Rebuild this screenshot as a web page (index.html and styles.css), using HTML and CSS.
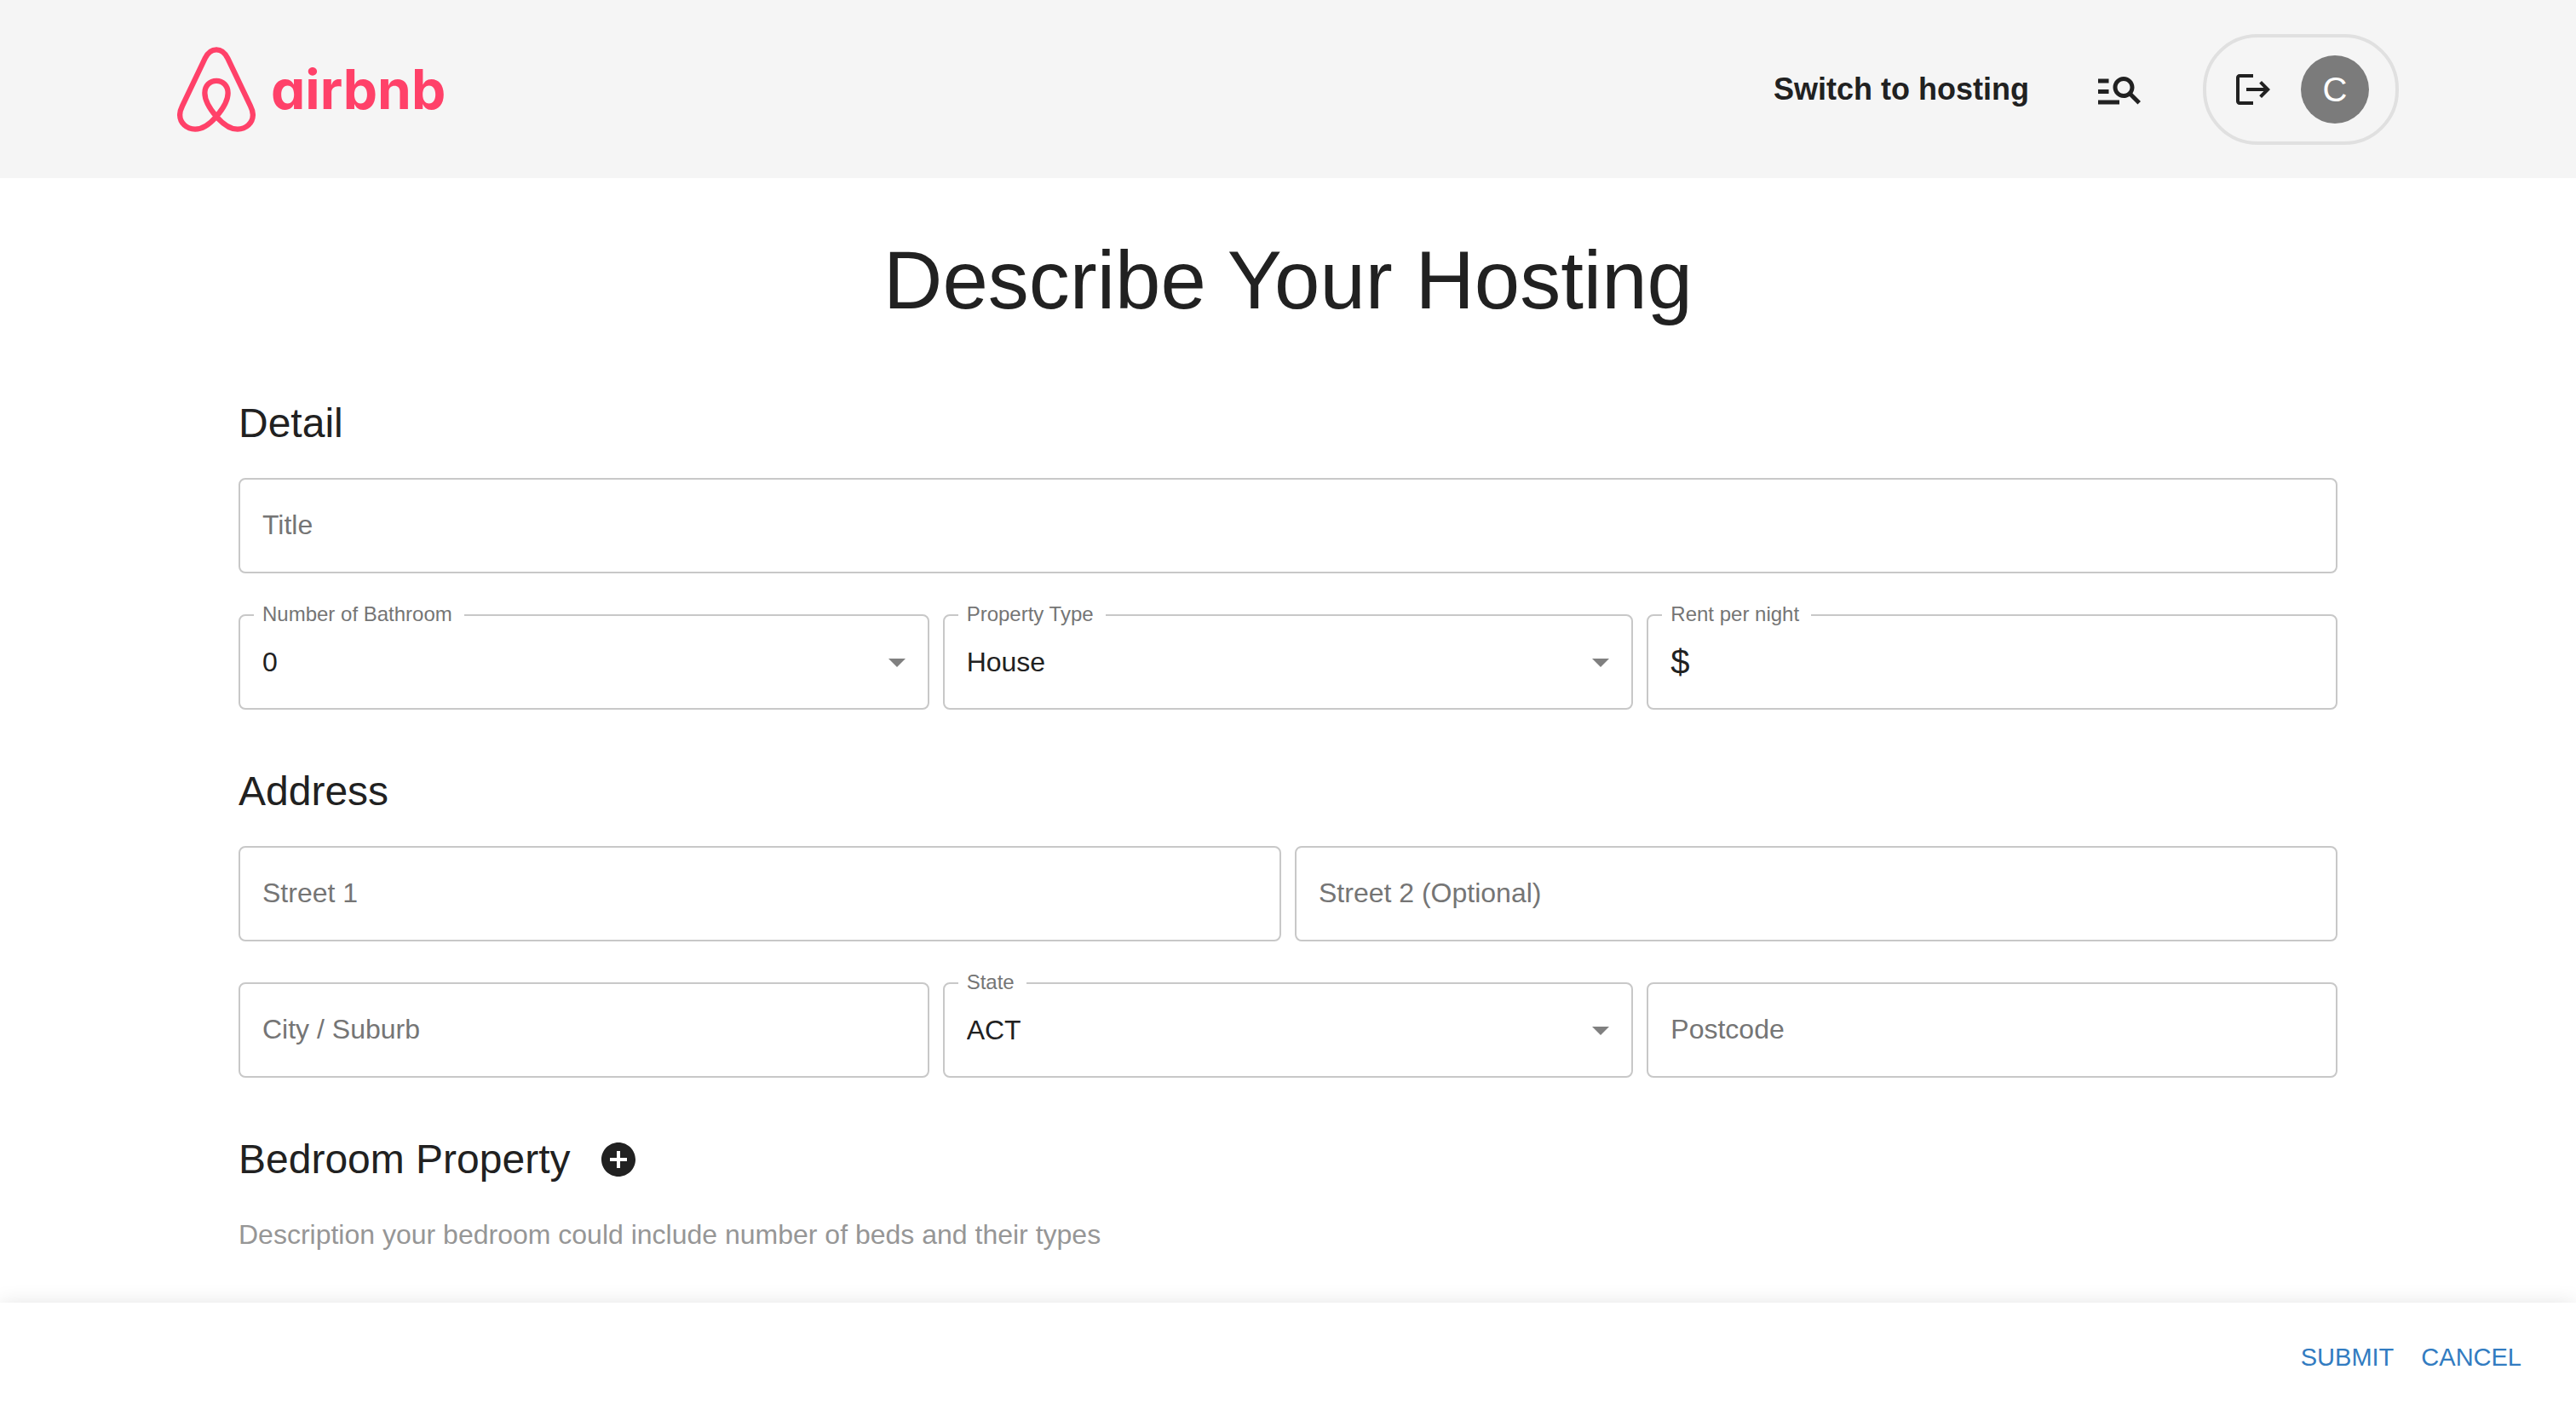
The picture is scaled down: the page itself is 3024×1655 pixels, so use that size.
FILE: index.html
```html
<!DOCTYPE html>
<html lang="en">
<head>
  <meta charset="utf-8">
  <meta name="viewport" content="width=device-width, initial-scale=1">
  <title>Describe Your Hosting</title>
  <link rel="stylesheet" href="styles.css">
</head>
<body>
  <header class="header">
    <div class="header-inner">
      <a class="brand" href="#">
        <svg class="brand-mark" viewBox="54 74 276 301" aria-hidden="true">
          <path d="M192 84C172 84 160 98 152 114L72 282C66 294 63 303 63 314C63 343 87 365 117 365C146 365 172 343 192 320C214 294 233 265 233 237C233 211 215 194 192 194C169 194 151 211 151 237C151 265 170 294 192 320C212 343 238 365 267 365C297 365 321 343 321 314C321 303 318 294 312 282L232 114C224 98 212 84 192 84Z"/>
        </svg>
        <span class="brand-name">airbnb</span>
      </a>
      <nav class="nav">
        <a class="nav-link" href="#">Switch to hosting</a>
        <button class="icon-button" type="button" aria-label="Search listings">
          <svg class="icon-search" viewBox="0 0 24 24" aria-hidden="true"><path d="M7 9H2V7h5v2zm0 3H2v2h5v-2zm13.59 7-3.83-3.83c-.8.52-1.74.83-2.76.83-2.76 0-5-2.24-5-5s2.24-5 5-5 5 2.24 5 5c0 1.02-.31 1.96-.83 2.75L22 17.59 20.59 19zM17 11c0-1.65-1.35-3-3-3s-3 1.35-3 3 1.35 3 3 3 3-1.35 3-3zM2 19h10v-2H2v2z"/></svg>
        </button>
        <div class="account">
          <button class="icon-button" type="button" aria-label="Log out">
            <svg class="icon" viewBox="0 0 24 24" aria-hidden="true"><path d="m17 7-1.41 1.41L18.17 11H8v2h10.17l-2.58 2.58L17 17l5-5zM4 5h8V3H4c-1.1 0-2 .9-2 2v14c0 1.1.9 2 2 2h8v-2H4V5z"/></svg>
          </button>
          <button class="avatar" type="button">C</button>
        </div>
      </nav>
    </div>
  </header>

  <main class="main">
    <h1 class="page-title">Describe Your Hosting</h1>
    <form class="form" id="hosting-form">
      <section class="section">
        <h2 class="section-title">Detail</h2>
        <div class="fields">
          <div class="field span-6">
            <input class="control" id="title" type="text">
            <label class="label" for="title">Title</label>
          </div>
          <div class="field span-2">
            <select class="control" id="bathrooms"><option>0</option><option>1</option><option>2</option><option>3</option></select>
            <label class="label label-raised" for="bathrooms">Number of Bathroom</label>
            <svg class="arrow" viewBox="0 0 24 24" aria-hidden="true"><path d="M7 10l5 5 5-5z"/></svg>
          </div>
          <div class="field span-2">
            <select class="control" id="type"><option>House</option><option>Apartment</option></select>
            <label class="label label-raised" for="type">Property Type</label>
            <svg class="arrow" viewBox="0 0 24 24" aria-hidden="true"><path d="M7 10l5 5 5-5z"/></svg>
          </div>
          <div class="field span-2">
            <input class="control control-money" id="rent" type="text" inputmode="numeric">
            <label class="label label-raised" for="rent">Rent per night</label>
            <span class="currency">$</span>
          </div>
        </div>
      </section>

      <section class="section">
        <h2 class="section-title">Address</h2>
        <div class="fields">
          <div class="field span-3">
            <input class="control" id="street1" type="text">
            <label class="label" for="street1">Street 1</label>
          </div>
          <div class="field span-3">
            <input class="control" id="street2" type="text">
            <label class="label" for="street2">Street 2 (Optional)</label>
          </div>
          <div class="field span-2">
            <input class="control" id="city" type="text">
            <label class="label" for="city">City / Suburb</label>
          </div>
          <div class="field span-2">
            <select class="control" id="state"><option>ACT</option><option>NSW</option><option>VIC</option></select>
            <label class="label label-raised" for="state">State</label>
            <svg class="arrow" viewBox="0 0 24 24" aria-hidden="true"><path d="M7 10l5 5 5-5z"/></svg>
          </div>
          <div class="field span-2">
            <input class="control" id="postcode" type="text">
            <label class="label" for="postcode">Postcode</label>
          </div>
        </div>
      </section>

      <section class="section">
        <div class="section-head">
          <h2 class="section-title">Bedroom Property</h2>
          <button class="icon-button" type="button" aria-label="Add bedroom">
            <svg class="icon" viewBox="0 0 24 24" aria-hidden="true"><path d="M12 2C6.48 2 2 6.48 2 12s4.48 10 10 10 10-4.48 10-10S17.52 2 12 2zm5 11h-4v4h-2v-4H7v-2h4V7h2v4h4v2z"/></svg>
          </button>
        </div>
        <p class="hint">Description your bedroom could include number of beds and their types</p>
      </section>
    </form>
  </main>

  <footer class="footer">
    <button class="text-button" type="submit" form="hosting-form">SUBMIT</button>
    <button class="text-button" type="button">CANCEL</button>
  </footer>
</body>
</html>
```
FILE: styles.css
```css
* {
  box-sizing: border-box;
}

body {
  margin: 0;
  min-height: 100vh;
  display: flex;
  flex-direction: column;
  background: #fff;
  color: #212121;
  font-family: "Liberation Sans", Arial, Helvetica, sans-serif;
  font-size: 32px;
  line-height: 48px;
}

button,
input,
select {
  font: inherit;
  color: inherit;
}

button {
  margin: 0;
  padding: 0;
  border: 0;
  background: none;
  cursor: pointer;
}

svg {
  display: block;
  fill: currentColor;
}

/* Header */

.header {
  background: #f5f5f5;
  padding: 40px 32px 39px;
}

.header-inner {
  max-width: 2608px;
  margin: 0 auto;
  display: flex;
  align-items: center;
  justify-content: space-between;
}

.brand {
  display: flex;
  align-items: center;
  gap: 18px;
  color: #ff4169;
  text-decoration: none;
}

.brand-mark {
  width: 92px;
  height: 100px;
  fill: none;
  stroke: currentColor;
  stroke-width: 19px;
}

.brand-name {
  font-family: Inter, "Liberation Sans", sans-serif;
  font-feature-settings: "cv11";
  font-size: 64px;
  font-weight: 700;
  line-height: 96px;
}

.nav {
  display: flex;
  align-items: center;
  gap: 68px;
}

.nav-link {
  padding-right: 8px;
  color: inherit;
  font-size: 36px;
  font-weight: 700;
  text-decoration: none;
}

.icon {
  width: 48px;
  height: 48px;
}

.icon-search {
  width: 60px;
  height: 60px;
}

.account {
  display: flex;
  align-items: center;
  gap: 32px;
  padding: 21px 31px;
  border: 4px solid #e0e0e0;
  border-radius: 64px;
}

.avatar {
  width: 80px;
  height: 80px;
  border-radius: 50%;
  background: #7b7b7b;
  color: #fff;
  font-size: 40px;
}

/* Form */

.main {
  flex: 1;
  width: 100%;
  max-width: 2528px;
  margin: 0 auto;
  padding: 64px 32px 48px;
}

.page-title {
  margin: 0 0 80px;
  font-size: 96px;
  font-weight: 400;
  line-height: 112px;
  text-align: center;
}

.form {
  display: flex;
  flex-direction: column;
  gap: 64px;
}

.section {
  display: flex;
  flex-direction: column;
  gap: 32px;
}

.section-head {
  display: flex;
  align-items: center;
  gap: 32px;
}

.section-title {
  margin: 0;
  font-size: 48px;
  font-weight: 400;
  line-height: 64px;
}

.fields {
  display: grid;
  grid-template-columns: repeat(6, minmax(0, 1fr));
  gap: 48px 16px;
}

.span-2 {
  grid-column: span 2;
}

.span-3 {
  grid-column: span 3;
}

.span-6 {
  grid-column: span 6;
}

.field {
  position: relative;
}

.control {
  display: block;
  width: 100%;
  height: 112px;
  padding: 0 26px;
  border: 2px solid #c8c8c8;
  border-radius: 8px;
  background: #fff;
  appearance: none;
  outline: 0;
}

.control:focus {
  border-color: #1976d2;
}

.control-money {
  padding-left: 64px;
}

.label {
  position: absolute;
  top: 31px;
  left: 28px;
  color: #757575;
}

.label-raised {
  top: -16px;
  left: 18px;
  padding: 0 14px 0 10px;
  background: #fff;
  font-size: 24px;
  line-height: 32px;
}

.arrow {
  position: absolute;
  top: 32px;
  right: 14px;
  width: 48px;
  height: 48px;
  color: #808080;
  pointer-events: none;
}

.currency {
  position: absolute;
  top: 32px;
  left: 28px;
  font-size: 40px;
}

.hint {
  margin: 0;
  color: #969696;
}

/* Action bar */

.footer {
  position: sticky;
  bottom: 0;
  display: flex;
  align-items: center;
  justify-content: flex-end;
  min-height: 126px;
  padding: 2px 48px 0;
  background: #fff;
  box-shadow: 0 2px 24px rgba(0, 0, 0, 0.12);
}

.text-button {
  padding: 12px 16px;
  color: #327cc1;
  font-size: 29px;
}
```
